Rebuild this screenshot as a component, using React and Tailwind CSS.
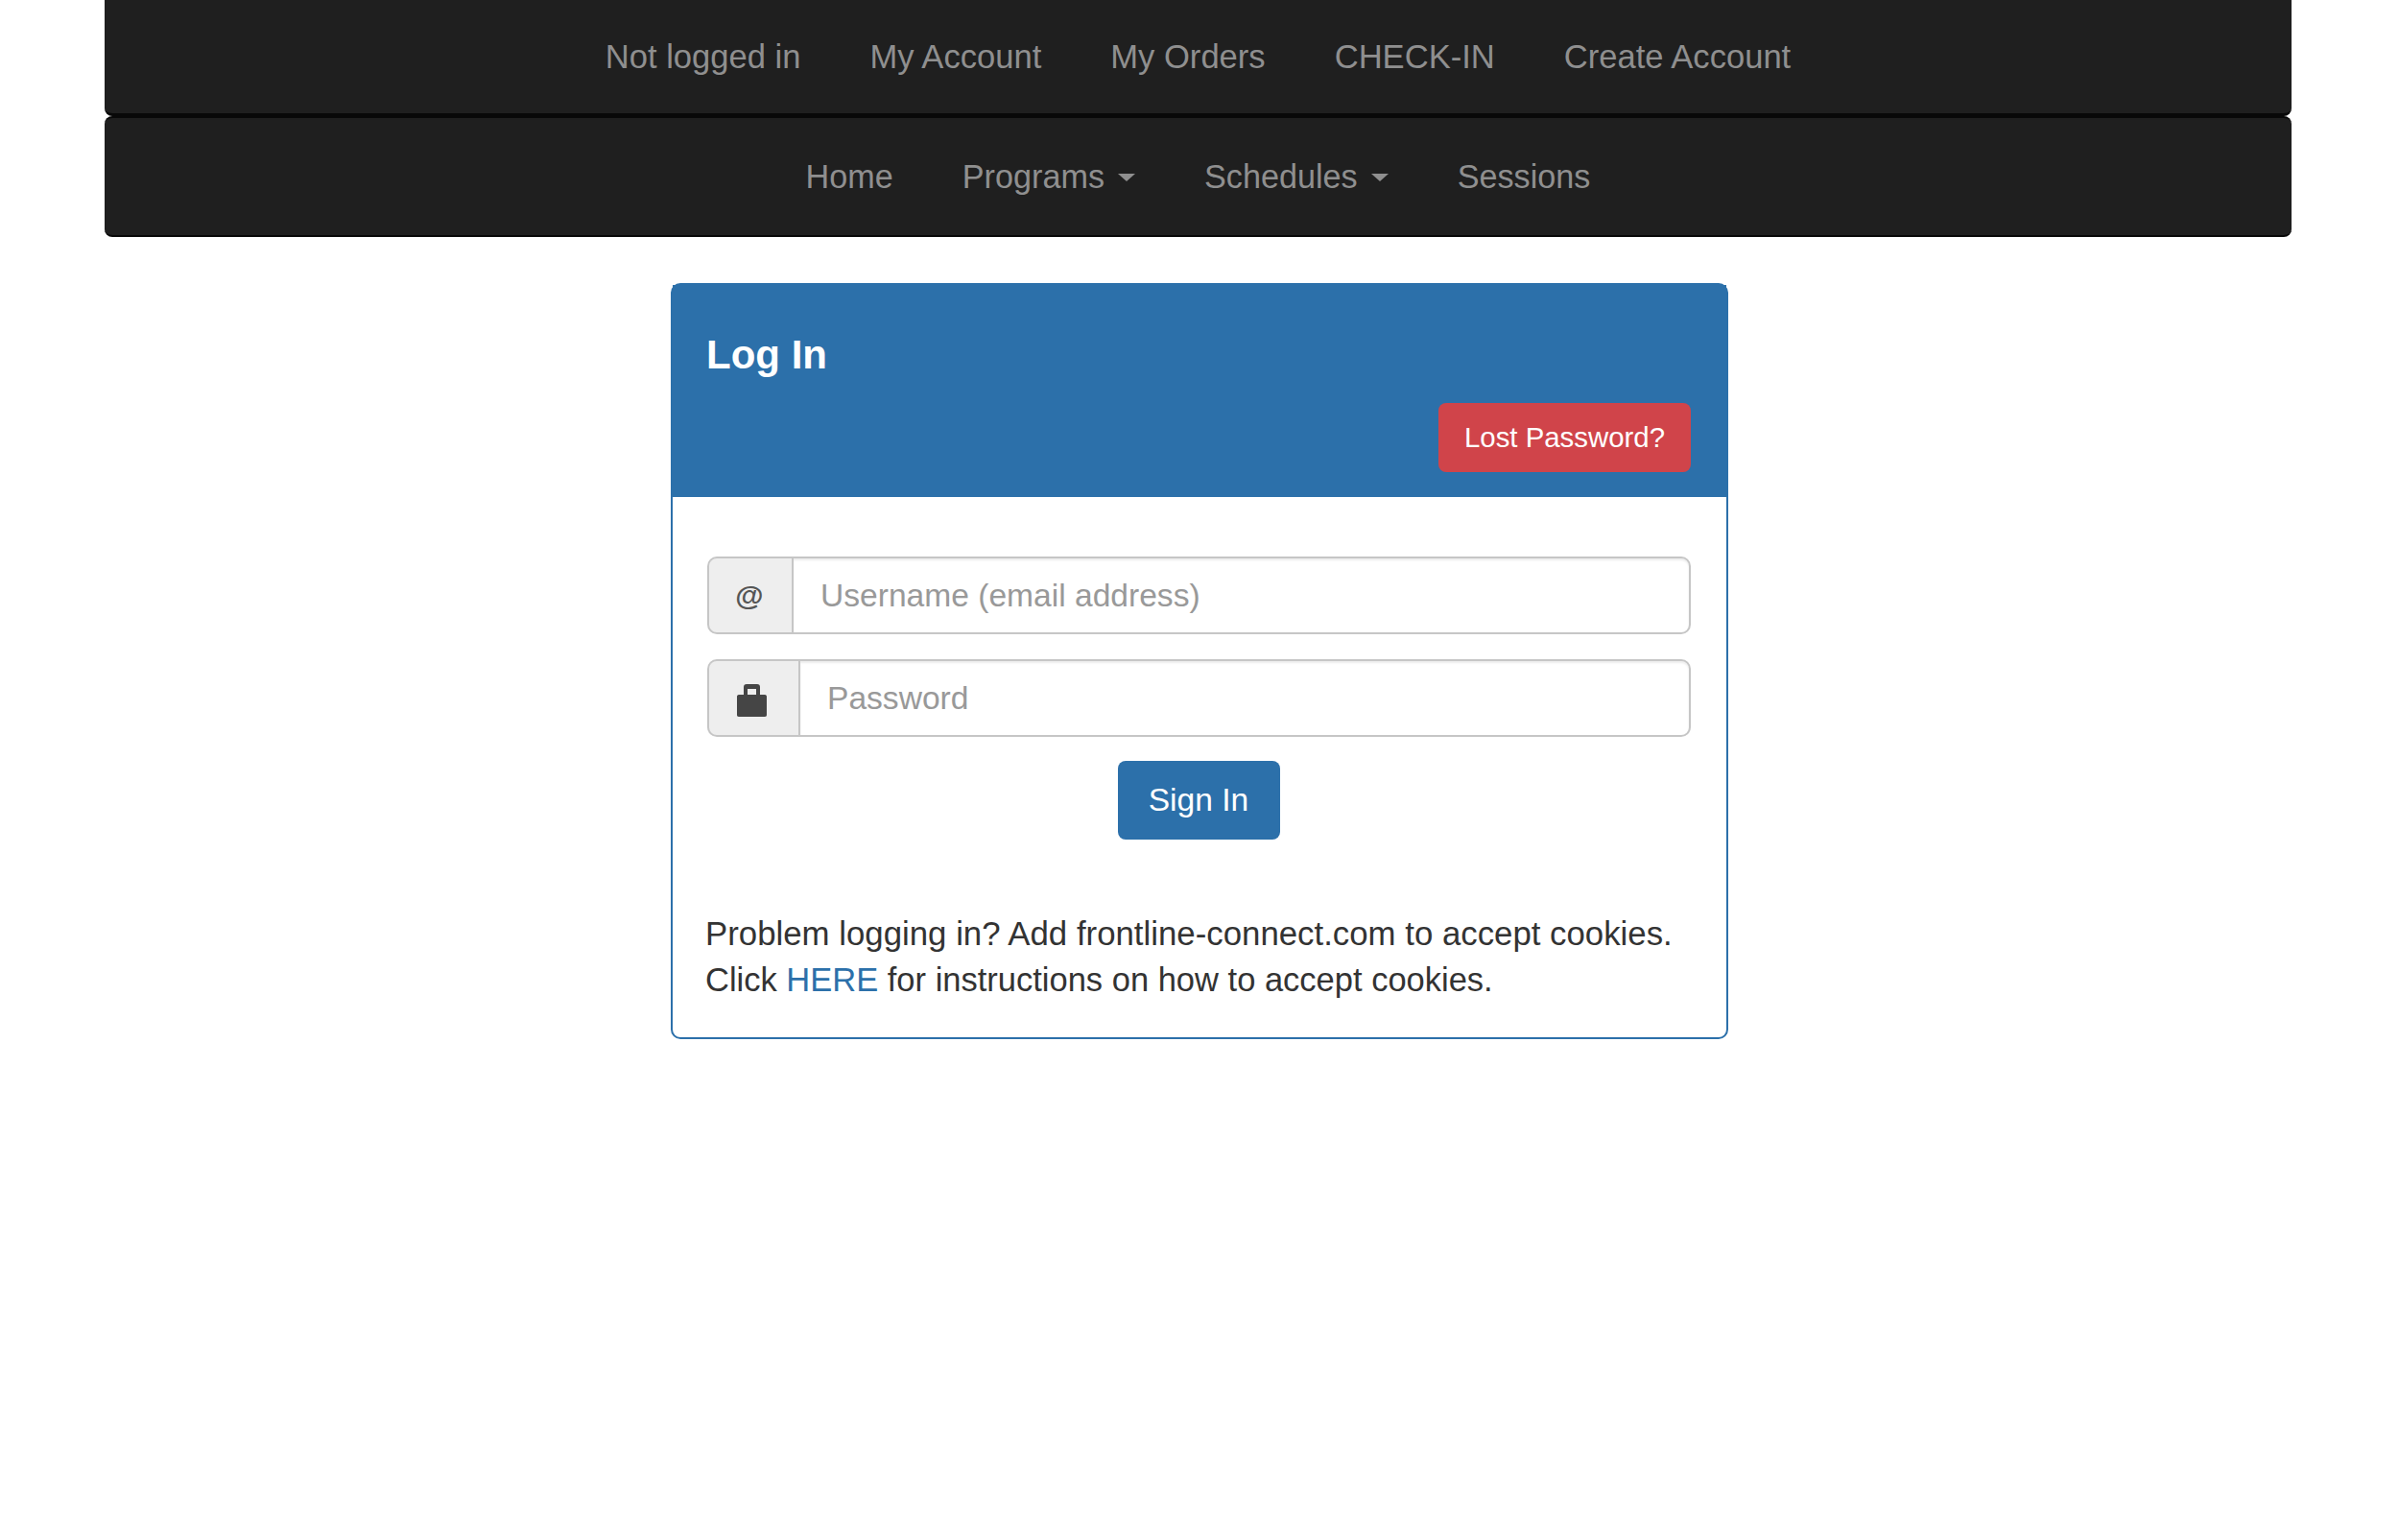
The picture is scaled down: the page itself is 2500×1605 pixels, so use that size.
import { useState } from 'react'

const topLinks = ['Not logged in', 'My Account', 'My Orders', 'CHECK-IN', 'Create Account']
const mainLinks = [
  { label: 'Home' },
  { label: 'Programs', caret: true },
  { label: 'Schedules', caret: true },
  { label: 'Sessions' },
]

function NavLink({ label, caret }) {
  return (
    <a href="#" className="flex items-center text-[#8f8f8f] no-underline">
      {label}
      {caret && (
        <span className="ml-[14px] mt-[2px] w-0 h-0 border-x-[9px] border-x-transparent border-t-[8px] border-t-[#8f8f8f]" />
      )}
    </a>
  )
}

function LockIcon() {
  return (
    <svg width="31" height="34" viewBox="0 0 31 34" className="mt-[5px] mr-[3px] text-[#454545]">
      <path
        fill="currentColor"
        fillRule="evenodd"
        d="M7 11V3C7 1 8 0 10 0H21C23 0 24 1 24 3V11H29C30.500 11 31 12 31 13V32C31 33 30.500 34 29 34H2C0.500 34 0 33 0 32V13C0 12 0.500 11 2 11zM11 11H20V5H11z"
      />
    </svg>
  )
}

function InputRow({ addon, addonWidth, placeholder, type, value, onChange }) {
  return (
    <div className="flex h-[81px]">
      <div
        className={`${addonWidth} flex items-center justify-center shrink-0 pr-[2px] bg-[#eeeeee] border-2 border-r-0 border-[#c6c6c6] rounded-l-[10px] text-[#555555]`}
      >
        {addon}
      </div>
      <input
        type={type}
        value={value}
        onChange={onChange}
        placeholder={placeholder}
        className="flex-1 min-w-0 px-[28px] border-2 border-[#c6c6c6] rounded-r-[10px] bg-white text-[#555555] placeholder:text-[#999999] outline-none shadow-[inset_0_2px_2px_rgba(0,0,0,0.075)]"
      />
    </div>
  )
}

export default function App() {
  const [username, setUsername] = useState('')
  const [password, setPassword] = useState('')

  return (
    <div className="min-h-screen bg-white text-[33.6px] leading-[48px] text-[#333333] font-['Liberation_Sans',Arial,sans-serif]">
      <nav className="ml-[109px] w-[2279px] h-[121px] flex items-center justify-center gap-[72px] text-[34.6px] bg-[#1f1f1f] border-b-[3px] border-[#080808] rounded-b-[8px]">
        {topLinks.map((label) => (
          <NavLink key={label} label={label} />
        ))}
      </nav>
      <nav className="ml-[109px] w-[2279px] h-[126px] flex items-center justify-center gap-[72px] text-[34.2px] bg-[#1f1f1f] border-y-2 border-y-[#080808] rounded-[8px]">
        {mainLinks.map((link) => (
          <NavLink key={link.label} {...link} />
        ))}
      </nav>

      <div className="mt-[48px] mx-auto w-[1102px] border-2 border-[#2c70aa] rounded-[10px]">
        <div className="bg-[#2c70aa] px-[35px] pt-[50px] pb-[26px]">
          <h3 className="text-[42px] leading-[46px] font-bold text-white">Log In</h3>
          <div className="mt-[27px] flex justify-end">
            <button className="h-[72px] w-[263px] mr-[2px] bg-[#d0444a] rounded-[8px] text-[29.4px] text-white">
              Lost Password?
            </button>
          </div>
        </div>
        <div className="pl-[36px] pr-[37px] pt-[62px] pb-[36px]">
          <div className="flex flex-col gap-[26px]">
            <InputRow
              addon={<span className="font-bold text-[30px]">@</span>}
              addonWidth="w-[88px]"
              placeholder="Username (email address)"
              type="text"
              value={username}
              onChange={(e) => setUsername(e.target.value)}
            />
            <InputRow
              addon={<LockIcon />}
              addonWidth="w-[95px]"
              placeholder="Password"
              type="password"
              value={password}
              onChange={(e) => setPassword(e.target.value)}
            />
          </div>
          <div className="mt-[25px] flex justify-center">
            <button className="h-[82px] w-[169px] mr-[1px] bg-[#2c70aa] rounded-[8px] text-white">Sign In</button>
          </div>
          <p className="mt-[74px] -ml-[2px] text-[34.8px] text-[#333333]">
            Problem logging in? Add frontline-connect.com to accept cookies.
            <br />
            <span className="text-[34.5px]">
              Click <a href="#" className="text-[#2c70aa]">HERE</a> for instructions on how to accept cookies.
            </span>
          </p>
        </div>
      </div>
    </div>
  )
}
